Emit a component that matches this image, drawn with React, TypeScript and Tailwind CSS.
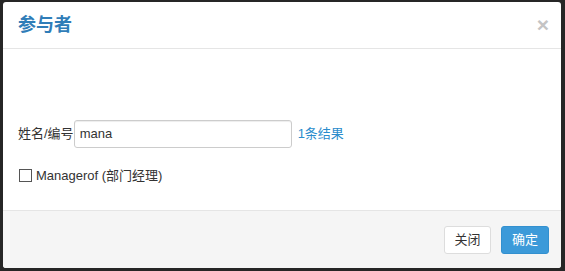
export default function App() {
  return (
    <div
      className="w-[565px] h-[271px] bg-[#262626] pt-[2px] pl-[3px] pr-[4px] pb-[3px]"
      style={{ fontFamily: '"Liberation Sans", "Noto Sans CJK SC", sans-serif' }}
    >
      <div className="h-full bg-white rounded-[3px] flex flex-col overflow-hidden">
        {/* Header */}
        <div className="h-[47px] flex items-center justify-between pl-[15px] pr-[12px] border-b border-[#e5e5e5]">
          <h4 className="text-[18px] font-bold text-[#2f7db8] leading-none">参与者</h4>
          <button className="text-[21px] font-bold text-[#c4c4c4] leading-none -mt-[2px]">×</button>
        </div>

        {/* Body */}
        <div className="flex-1 px-[15px] flex flex-col justify-end pb-[25px] text-[13px] text-[#333]">
          <div className="flex items-center">
            <span>姓名/编号</span>
            <input
              defaultValue="mana"
              className="w-[218px] h-[28px] border border-[#ccc] rounded-[3px] px-[5px] text-[13px] text-[#333] outline-none shadow-[inset_0_1px_1px_rgba(0,0,0,0.075)]"
            />
            <span className="ml-[6px] text-[#2b8ccc]">1条结果</span>
          </div>
          <label className="flex items-center mt-[18px]">
            <span className="w-[13px] h-[13px] border border-[#555] bg-white ml-[1px] mr-[4px]" />
            <span>Managerof (部门经理)</span>
          </label>
        </div>

        {/* Footer */}
        <div className="h-[58px] bg-[#f5f5f5] border-t border-[#e5e5e5] flex items-center justify-end gap-[10px] pr-[12px]">
          <button className="h-[28px] w-[47px] bg-white border border-[#ddd] rounded-[3px] text-[13px] text-[#333]">
            关闭
          </button>
          <button className="h-[28px] w-[48px] bg-[#3c9ad9] border border-[#3390cf] rounded-[3px] text-[13px] text-white">
            确定
          </button>
        </div>
      </div>
    </div>
  )
}
